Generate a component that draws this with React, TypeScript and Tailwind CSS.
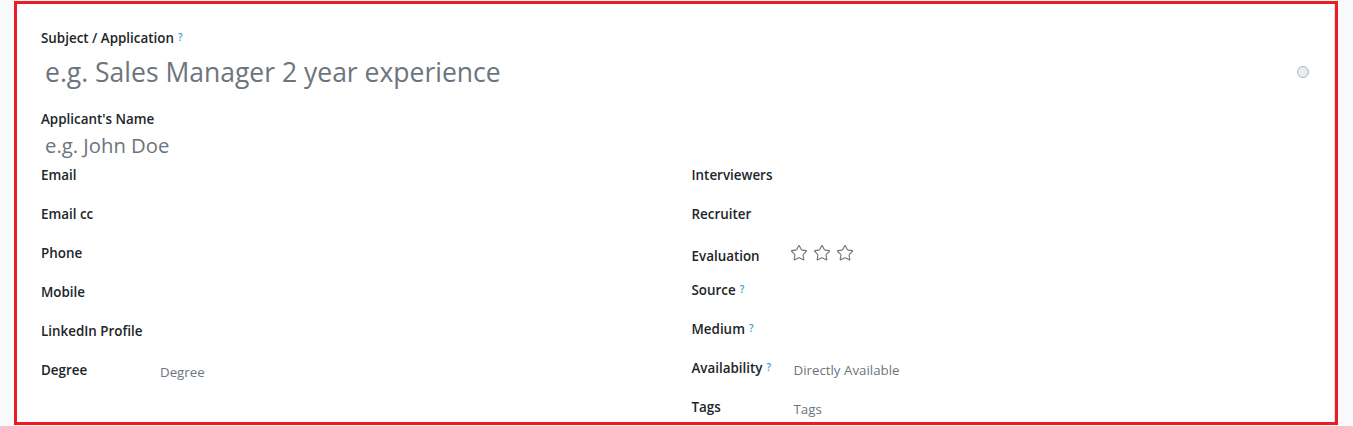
import { Star } from "lucide-react"

const font = { fontFamily: '"Open Sans", "Noto Sans", sans-serif' }

function Help() {
  return <sup className="ml-1 text-[10px] font-semibold text-[#3c9bd0] relative -top-[2px]">?</sup>
}

function Row({
  label,
  help,
  value,
  h,
  labelW,
  children,
}: {
  label: string
  help?: boolean
  value?: string
  h: string
  labelW: string
  children?: React.ReactNode
}) {
  return (
    <div className={`flex items-start ${h}`}>
      <div className={`${labelW} shrink-0 text-[13.4px] font-semibold leading-[20px] text-[#212529]`}>
        {label}
        {help && <Help />}
      </div>
      {value && <div className="pt-[2px] text-[13.3px] leading-[20px] text-[#6c757d]">{value}</div>}
      {children}
    </div>
  )
}

export default function App() {
  return (
    <div className="h-[426px] bg-[#f8f9fa] pt-px pl-[14px] pr-[15px]" style={font}>
      <div className="h-[424px] border-[3px] border-[#ed1c24] bg-white">
        <div className="h-full border-r border-[#dee2e6] px-6 pt-[24px]">
          <div className="text-[13.4px] font-semibold leading-[20px] text-[#212529]">
            Subject / Application
            <Help />
          </div>
          <div className="mt-1 flex items-center justify-between">
            <div className="pl-1 text-[26.5px] leading-[40px] text-[#6c757d]">
              e.g. Sales Manager 2 year experience
            </div>
            <div className="mr-[1px] h-3 w-3 rounded-full border border-[#adb5bd] bg-[#e9ecef]" />
          </div>
          <div className="mt-[17px] text-[13.4px] font-semibold leading-[20px] text-[#212529]">
            Applicant's Name
          </div>
          <div className="mt-[2px] pl-1 text-[20.3px] leading-[28px] text-[#6c757d]">e.g. John Doe</div>

          <div className="mt-[6px] grid grid-cols-2 gap-x-8">
            <div className="flex flex-col">
              <Row label="Email" h="h-[39px]" labelW="w-[119px]" />
              <Row label="Email cc" h="h-[39px]" labelW="w-[119px]" />
              <Row label="Phone" h="h-[39px]" labelW="w-[119px]" />
              <Row label="Mobile" h="h-[39px]" labelW="w-[119px]" />
              <Row label="LinkedIn Profile" h="h-[39px]" labelW="w-[119px]" />
              <Row label="Degree" value="Degree" h="h-[39px]" labelW="w-[119px]" />
            </div>
            <div className="flex flex-col">
              <Row label="Interviewers" h="h-[39px]" labelW="w-[102px]" />
              <Row label="Recruiter" h="h-[42px]" labelW="w-[102px]" />
              <div className="flex h-[34px] items-start">
                <div className="w-[98px] shrink-0 text-[13.4px] font-semibold leading-[20px] text-[#212529]">
                  Evaluation
                </div>
                <div className="-mt-[2px] flex gap-[5px] text-[#6c757d]">
                  <Star size={18} strokeWidth={1.5} />
                  <Star size={18} strokeWidth={1.5} />
                  <Star size={18} strokeWidth={1.5} />
                </div>
              </div>
              <Row label="Source" help h="h-[39px]" labelW="w-[102px]" />
              <Row label="Medium" help h="h-[39px]" labelW="w-[102px]" />
              <Row label="Availability" help value="Directly Available" h="h-[39px]" labelW="w-[102px]" />
              <Row label="Tags" value="Tags" h="h-[39px]" labelW="w-[102px]" />
            </div>
          </div>
        </div>
      </div>
    </div>
  )
}
